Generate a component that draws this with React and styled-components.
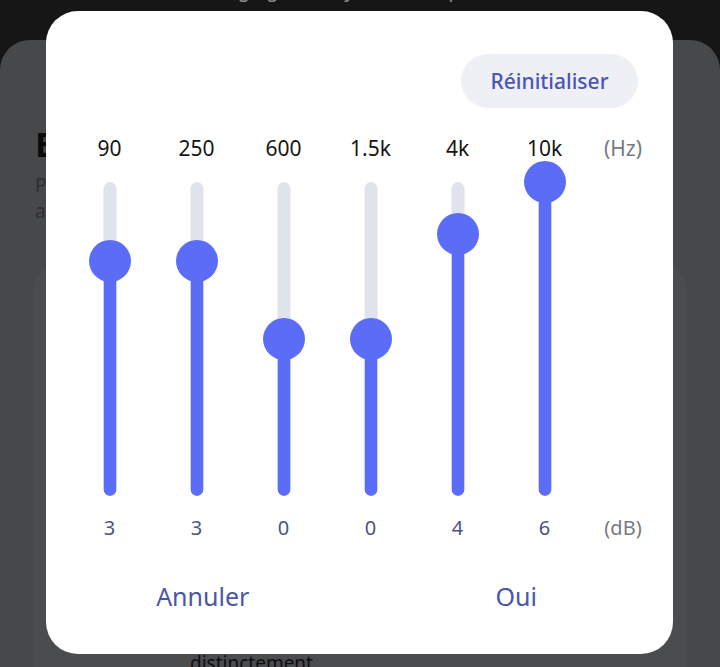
import React from "react";
import styled, { createGlobalStyle } from "styled-components";

const Global = createGlobalStyle`
  html, body { margin: 0; padding: 0; background: #161616; }
  body { font-family: "Noto Sans", "Liberation Sans", sans-serif; overflow: hidden; }
  #root { height: 667px; }
`;

const Page = styled.div`
  position: relative;
  width: 720px;
  height: 667px;
  overflow: hidden;
  background: #161616;
  display: flex;
  flex-direction: column;
`;

const TopBar = styled.div`
  flex: 0 0 40px;
  height: 40px;
  display: flex;
  justify-content: center;
  overflow: hidden;
`;

const TopText = styled.div`
  margin-top: -23px;
  font-size: 20px;
  line-height: 26px;
  color: #8d8d8d;
`;

const Sheet = styled.div`
  flex: 1 1 auto;
  min-height: 0;
  overflow: hidden;
  background: #47484a;
  border-radius: 30px 30px 0 0;
  padding: 82px 33px 0;
  display: flex;
  flex-direction: column;
`;

const Title = styled.h1`
  margin: 0 0 0 2px;
  font-size: 34px;
  line-height: 44px;
  font-weight: 700;
  color: #0b0b0b;
`;

const Subtitle = styled.p`
  margin: 6px 0 0 2px;
  font-size: 19px;
  line-height: 26px;
  color: #2e2f32;
`;

const Panel = styled.div`
  flex: 0 0 auto;
  margin-top: 40px;
  background: #4b4c4e;
  border-radius: 26px 26px 0 0;
  padding: 386px 0 40px 157px;
`;

const PanelText = styled.div`
  font-size: 19px;
  line-height: 26px;
  color: #0e0e0e;
`;

const Dialog = styled.div`
  position: absolute;
  left: 46px;
  top: 11px;
  width: 627px;
  height: 643px;
  box-sizing: border-box;
  background: #ffffff;
  border-radius: 32px;
  padding: 43px 0 26px;
  display: flex;
  flex-direction: column;
`;

const Header = styled.div`
  display: flex;
  justify-content: flex-end;
  padding-right: 35px;
`;

const ResetButton = styled.button`
  width: 177px;
  height: 54px;
  border: none;
  border-radius: 27px;
  background: #eff0f5;
  color: #4a55b5;
  font-family: "Noto Sans", sans-serif;
  font-size: 21px;
  font-weight: 500;
  padding: 0;
  cursor: pointer;
`;

const BandRow = styled.div`
  display: grid;
  grid-template-columns: repeat(6, 87px) 70px;
  padding-left: 20px;
  justify-items: center;
  margin-top: ${(p) => p.$mt || 0}px;
`;

const FreqLabel = styled.div`
  font-size: 21px;
  line-height: 28px;
  color: ${(p) => (p.$unit ? "#777a84" : "#151515")};
`;

const ValueLabel = styled.div`
  font-size: 20px;
  line-height: 28px;
  color: ${(p) => (p.$unit ? "#777a84" : "#4a5386")};
`;

const SliderBox = styled.div`
  position: relative;
  width: 42px;
  height: 356px;
`;

const Track = styled.div`
  position: absolute;
  top: 21px;
  bottom: 21px;
  left: 50%;
  width: 13px;
  transform: translateX(-50%);
  background: #e1e3ec;
  border-radius: 7px;
  overflow: hidden;
`;

const Fill = styled.div`
  position: absolute;
  left: 0;
  right: 0;
  bottom: 0;
  background: #5b6cf6;
  border-radius: 0 0 7px 7px;
`;

const Thumb = styled.div`
  position: absolute;
  left: 0;
  width: 42px;
  height: 42px;
  border-radius: 50%;
  background: #5b6cf6;
`;

const Actions = styled.div`
  display: flex;
  margin-top: 22px;
`;

const ActionButton = styled.button`
  flex: 1;
  height: 64px;
  border: none;
  background: transparent;
  color: #4b56a8;
  font-family: "Noto Sans", sans-serif;
  font-size: 25px;
  padding: 0;
  cursor: pointer;
`;

const TRACK = 314;

function Slider({ value }) {
  const frac = (value + 6) / 12;
  const fromBottom = frac * TRACK;
  const thumbTop = TRACK - fromBottom;
  return (
    <SliderBox>
      <Track>
        <Fill style={{ height: `${fromBottom}px` }} />
      </Track>
      <Thumb style={{ top: `${thumbTop}px` }} />
    </SliderBox>
  );
}

const bands = [
  { f: "90", v: 3 },
  { f: "250", v: 3 },
  { f: "600", v: 0 },
  { f: "1.5k", v: 0 },
  { f: "4k", v: 4 },
  { f: "10k", v: 6 },
];

export default function App() {
  return (
    <>
      <Global />
      <Page>
        <TopBar>
          <TopText>Réglages du système et qualité</TopText>
        </TopBar>
        <Sheet>
          <Title>Egaliseur</Title>
          <Subtitle>
            Personnalisez le son de vos écouteurs
            <br />
            afin d'obtenir le rendu souhaité.
          </Subtitle>
          <Panel>
            <PanelText>distinctement</PanelText>
          </Panel>
        </Sheet>
        <Dialog>
          <Header>
            <ResetButton>Réinitialiser</ResetButton>
          </Header>
          <BandRow $mt={26}>
            {bands.map((b) => (
              <FreqLabel key={b.f}>{b.f}</FreqLabel>
            ))}
            <FreqLabel $unit>(Hz)</FreqLabel>
          </BandRow>
          <BandRow $mt={-1}>
            {bands.map((b) => (
              <Slider key={b.f} value={b.v} />
            ))}
            <div />
          </BandRow>
          <BandRow $mt={-3}>
            {bands.map((b) => (
              <ValueLabel key={b.f}>{b.v}</ValueLabel>
            ))}
            <ValueLabel $unit>(dB)</ValueLabel>
          </BandRow>
          <Actions>
            <ActionButton>Annuler</ActionButton>
            <ActionButton>Oui</ActionButton>
          </Actions>
        </Dialog>
      </Page>
    </>
  );
}
